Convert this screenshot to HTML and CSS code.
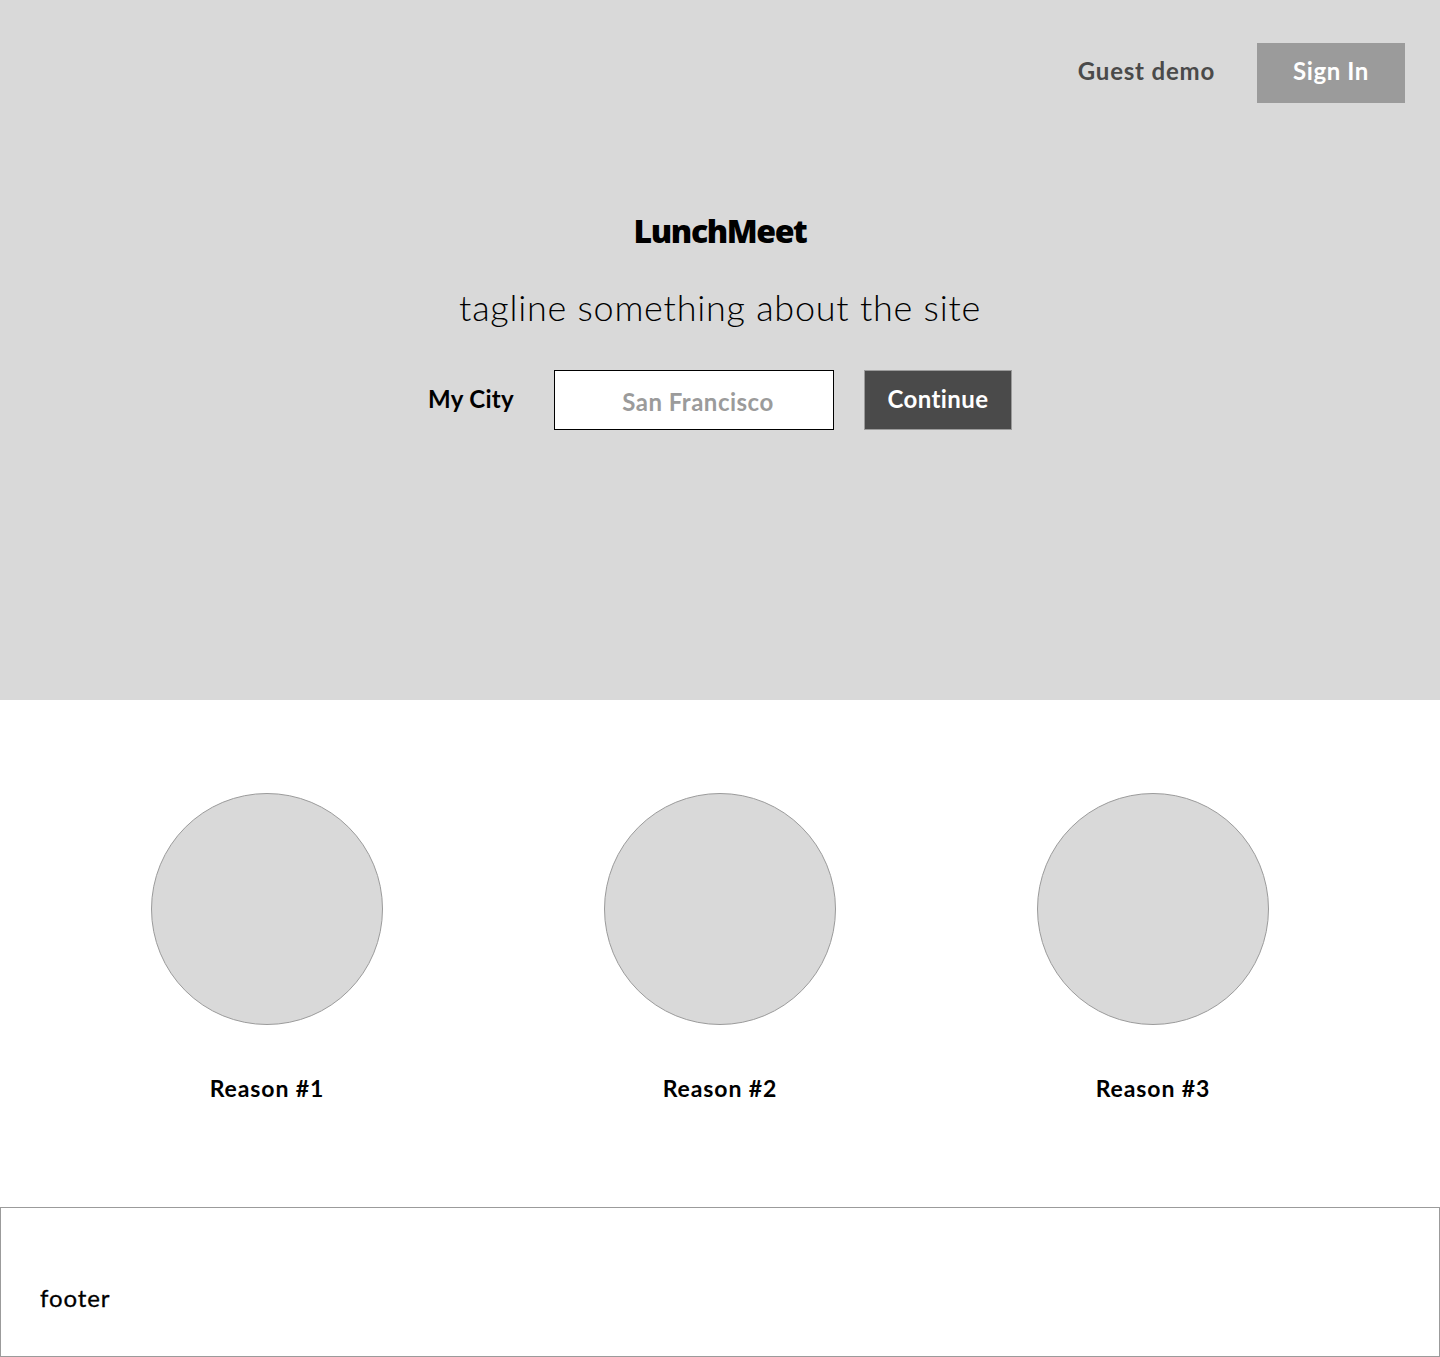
FILE: index.html
```html
<!DOCTYPE html>
<html lang="en">
<head>
<meta charset="utf-8">
<title>LunchMeet</title>
<link rel="stylesheet" href="styles.css">
</head>
<body>
<header class="hero">
  <nav class="topnav">
    <a class="guest" href="#">Guest demo</a>
    <a class="signin" href="#">Sign In</a>
  </nav>
  <div class="hero-body">
    <h1 class="brand">LunchMeet</h1>
    <p class="tagline">tagline something about the site</p>
    <form class="city-form">
      <label class="city-label" for="city">My City</label>
      <input id="city" class="city-input" type="text" placeholder="San Francisco">
      <button type="button" class="continue">Continue</button>
    </form>
  </div>
</header>
<main class="reasons">
  <div class="reason">
    <div class="circle"></div>
    <p class="reason-label">Reason #1</p>
  </div>
  <div class="reason">
    <div class="circle"></div>
    <p class="reason-label">Reason #2</p>
  </div>
  <div class="reason">
    <div class="circle"></div>
    <p class="reason-label">Reason #3</p>
  </div>
</main>
<footer class="footer">
  <p class="footer-text">footer</p>
</footer>
</body>
</html>
```
FILE: styles.css
```css
* { box-sizing: border-box; }
html, body { margin: 0; padding: 0; }
body {
  font-family: "Lato", "Noto Sans", sans-serif;
  color: #000;
  background: #fff;
}
.hero {
  background: #d9d9d9;
  height: 700px;
  display: flex;
  flex-direction: column;
}
.topnav {
  display: flex;
  justify-content: flex-end;
  align-items: flex-start;
  padding: 43px 35px 0 0;
  gap: 42px;
}
.guest {
  color: #4a4a4a;
  text-decoration: none;
  font-size: 24px;
  font-weight: 700;
  letter-spacing: 0.8px;
  line-height: 56px;
}
.signin {
  width: 148px;
  height: 60px;
  background: #9b9b9b;
  color: #fff;
  text-decoration: none;
  display: flex;
  align-items: center;
  justify-content: center;
  font-size: 24px;
  font-weight: 700;
  letter-spacing: 0.6px;
  padding: 0 0 5px 0;
}
.hero-body {
  display: flex;
  flex-direction: column;
  align-items: center;
  padding-top: 106px;
}
.brand {
  margin: 0;
  font-family: "Open Sans", sans-serif;
  font-weight: 800;
  font-size: 32px;
  line-height: 40px;
  letter-spacing: -1.4px;
  padding-top: 2px;
}
.tagline {
  margin: 34px 0 0;
  font-size: 36px;
  font-weight: 300;
  line-height: 44px;
  letter-spacing: 0.75px;
}
.city-form {
  display: flex;
  align-items: center;
  margin-top: 41px;
}
.city-label {
  font-size: 24px;
  font-weight: 700;
  letter-spacing: 0.3px;
  margin-right: 40px;
  margin-top: -4px;
}
.city-input {
  width: 280px;
  height: 60px;
  border: 1px solid #000;
  background: #fff;
  font-family: "Lato", sans-serif;
  font-size: 24px;
  font-weight: 700;
  letter-spacing: 0.5px;
  text-align: center;
  padding: 2px 0 0 8px;
  outline: none;
}
.city-input::placeholder { color: #9b9b9b; }
.continue {
  margin-left: 30px;
  width: 148px;
  height: 60px;
  background: #4a4a4a;
  border: 1px solid #9b9b9b;
  color: #fff;
  font-family: "Lato", sans-serif;
  font-size: 24px;
  font-weight: 700;
  letter-spacing: 0.4px;
  padding: 0 0 3px;
}
.reasons {
  display: grid;
  grid-template-columns: 466px 440px 426px;
  padding: 93px 0 0 34px;
  height: 507px;
}
.reason {
  display: flex;
  flex-direction: column;
  align-items: center;
}
.circle {
  width: 232px;
  height: 232px;
  border-radius: 50%;
  background: #d9d9d9;
  border: 1px solid #9b9b9b;
}
.reason-label {
  margin: 49px 0 0;
  font-size: 23px;
  font-weight: 700;
  line-height: 28px;
  letter-spacing: 0.9px;
}
.footer {
  height: 150px;
  border: 1px solid #9b9b9b;
  display: flex;
  align-items: center;
  padding: 30px 0 0 39px;
}
.footer-text {
  margin: 0;
  font-size: 24px;
  font-weight: 400;
  letter-spacing: 0.9px;
  -webkit-text-stroke: 0.3px #000;
}
```
